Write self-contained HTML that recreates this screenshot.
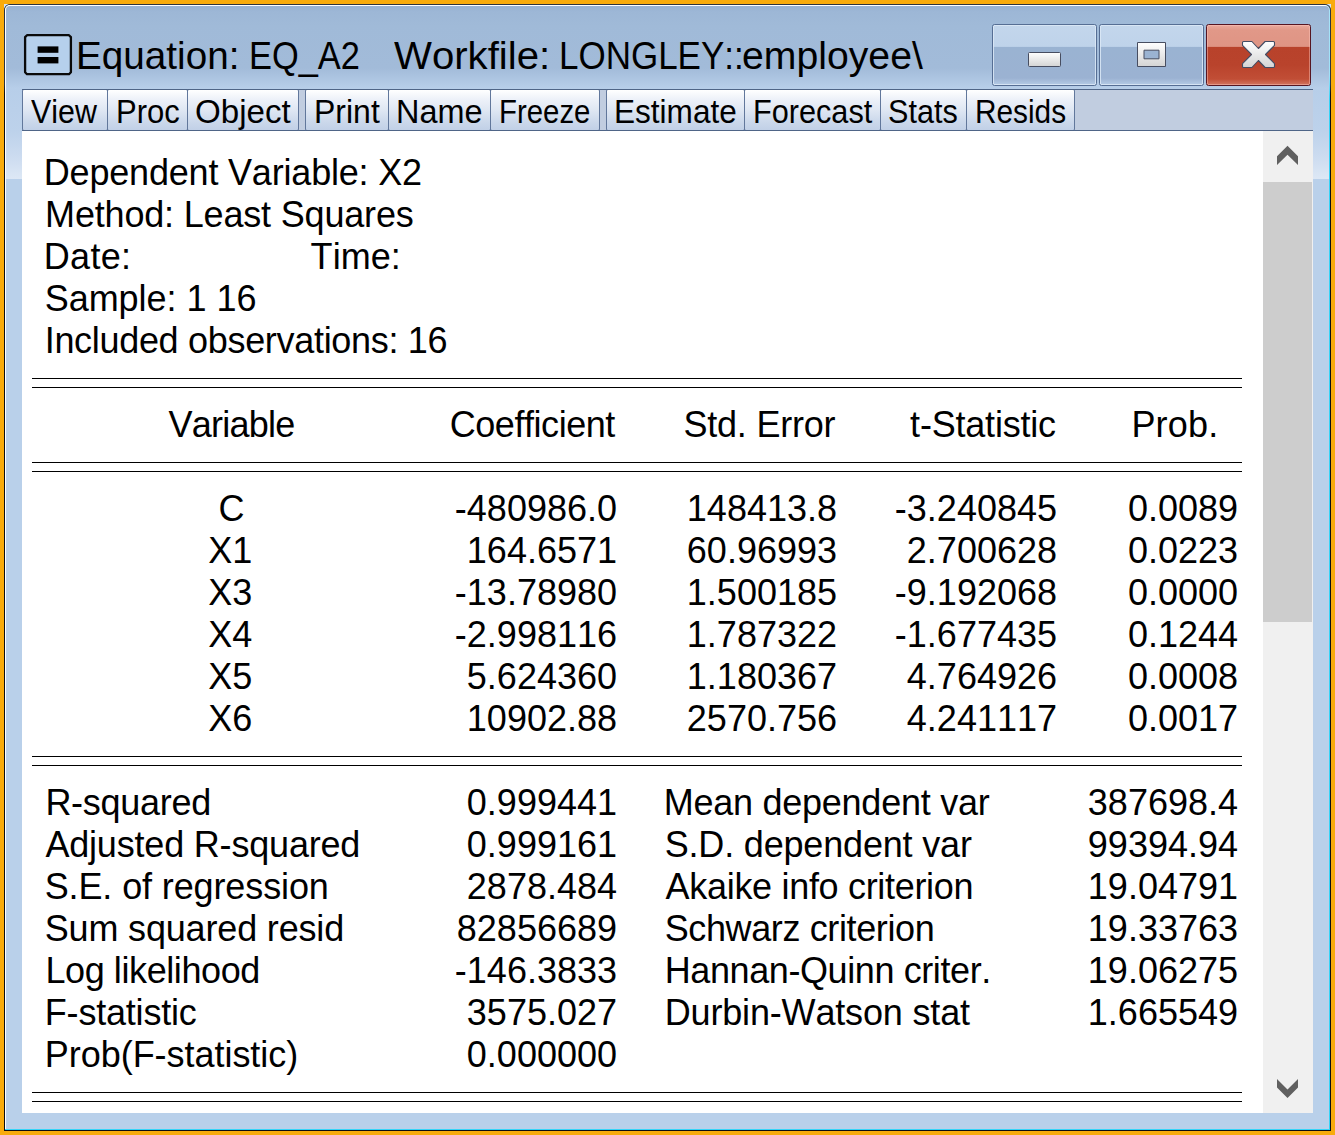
<!DOCTYPE html><html><head><meta charset="utf-8"><title>Equation: EQ_A2</title><style>
html,body{margin:0;padding:0;}
body{width:1335px;height:1135px;overflow:hidden;background:#f8ab0c;position:relative;font-family:"Liberation Sans",sans-serif;color:#000;font-kerning:none;font-variant-ligatures:none;}
.abs{position:absolute;}
#dark{left:4px;top:4px;width:1327px;height:1127px;background:linear-gradient(to bottom,#2b3340 0,#2b3340 80px,#0c0e12 90px,#0c0e12 100%);border-radius:6px 6px 0 0;}
.cpx{position:absolute;top:4px;width:4px;height:4px;background:#d4e5f8;}
#hl{left:5px;top:5px;width:1324px;height:1124px;border-radius:5px 5px 0 0;background:#ffffff;}
#cy{left:5px;top:5px;width:1325px;height:1125px;border-radius:5px 5px 0 0;background:linear-gradient(to bottom,#a8e4f8 0,#9fe2f8 70px,#35d4f7 95px,#35d4f7 100%);}
#frame{left:6px;top:6px;width:1323px;height:1123px;border-radius:4px 4px 0 0;
 background:linear-gradient(to bottom,#98b2d2 0px,#9db7d6 6px,#a0bad8 20px,#a2bbd9 62px,#b7ceE9 82px,#bdd2eb 126px,#cddcf0 152px,#dde8f5 173px,#b9d0ea 173px,#b9d0ea 100%);}
#tb{left:22px;top:89px;width:1291px;height:42px;background:#c1cde0;border-top:1px solid #4f6587;border-bottom:1px solid #4f6587;box-sizing:border-box;}
.btn{position:absolute;top:89px;height:42px;box-sizing:border-box;border:1px solid #6f86ab;border-radius:3px;
 background:linear-gradient(to bottom,#ffffff 0%,#eef2f9 22%,#dfe7f3 50%,#cbd8eb 80%,#c1d0e7 100%);border-color:#4f6587 #61779b #4f6587 #61779b;border-radius:2px;}
.btn span{position:absolute;top:1.4px;left:0;white-space:nowrap;font-size:33px;line-height:42px;transform-origin:0 50%;}
#content{left:22px;top:131px;width:1241px;height:982px;background:#fff;}
#sb{left:1263px;top:131px;width:50px;height:982px;background:#f0f0f0;}
#thumb{left:1263px;top:182px;width:49px;height:440px;background:#cdcdcd;}
.t{position:absolute;white-space:nowrap;font-size:36px;line-height:42px;height:42px;}
.r{text-align:right;}
.c{text-align:center;}
.ln{position:absolute;left:32px;width:1210px;height:1px;background:#000;}
.cap{position:absolute;top:24px;height:62px;box-sizing:border-box;border-radius:2.5px;}
.ttl{position:absolute;white-space:nowrap;font-size:38.4px;line-height:44px;top:33.6px;transform-origin:0 50%;}
</style></head><body>
<div class="cpx" style="left:4px"></div><div class="cpx" style="left:1327px"></div><div class="abs" id="dark"></div><div class="abs" id="cy"></div><div class="abs" id="hl"></div><div class="abs" id="frame"></div>
<svg class="abs" style="left:22px;top:32px" width="52" height="46" viewBox="22 32 52 46">
<path d="M27 35.2H69L70.9 37.1V72.3L69 74.2H27L25.1 72.3V37.1Z" fill="#b6d0ec" stroke="#0a0a0a" stroke-width="2.3" stroke-linejoin="round"/>
<rect x="37.6" y="46.4" width="20.8" height="6.4" fill="#000"/><rect x="37.6" y="57" width="20.8" height="6.4" fill="#000"/></svg>
<div id="title"><span class="ttl" style="left:75.78px;transform:scaleX(1.0071)">Equation: </span><span class="ttl" style="left:249.31px;transform:scaleX(0.8952)">EQ_A2   </span><span class="ttl" style="left:394.41px;transform:scaleX(1.0459)">Workfile: </span><span class="ttl" style="left:559.07px;transform:scaleX(0.9114)">LONGLEY::</span><span class="ttl" style="left:742.30px;transform:scaleX(1.0209)">employee\</span></div>
<div class="cap" style="left:992px;width:105px;border:1px solid #566e94;background:linear-gradient(to bottom,#c3d6ec 0,#bfd3ea 21.4px,#9ab3d2 22.3px,#9bb2d2 53px,#b5cbe6 60px);box-shadow:inset 0 0 0 1px rgba(220,233,247,.85);"></div>
<div class="cap" style="left:1099px;width:105px;border:1px solid #566e94;background:linear-gradient(to bottom,#c3d6ec 0,#bfd3ea 21.4px,#9ab3d2 22.3px,#9bb2d2 53px,#b5cbe6 60px);box-shadow:inset 0 0 0 1px rgba(220,233,247,.85);"></div>
<div class="cap" style="left:1206px;width:105px;border:1px solid #561622;background:linear-gradient(to bottom,#eaaa9d 0,#e19888 5px,#df9484 21.4px,#b8422b 22.3px,#b9432c 40px,#c14e36 54px,#d27560 60px);box-shadow:inset 0 0 0 1px rgba(255,200,190,.45);"></div>
<svg class="abs" style="left:1020px;top:36px" width="270" height="40" viewBox="1020 36 270 40">
<defs><linearGradient id="g" x1="0" y1="0" x2="0" y2="1"><stop offset="0" stop-color="#ffffff"/><stop offset="1" stop-color="#d4d4d4"/></linearGradient></defs>
<rect x="1028.5" y="52.5" width="32" height="14" rx="1" fill="url(#g)" stroke="#474d60" stroke-width="1"/>
<path fill-rule="evenodd" d="M1137.5 42.5h28v24h-28z M1144 50.2h15v8.6h-15z" fill="url(#g)" stroke="#474d60" stroke-width="1"/>
<path d="M1242.5 42.5Q1242.5 41.5 1243.5 41.5H1251.9L1258.4 48.5L1265.1 41.5H1273.5Q1274.5 41.5 1274.5 42.5V45.3L1265.5 54.5L1274.5 63.6V66.5Q1274.5 67.5 1273.5 67.5H1265.1L1258.4 60.5L1251.9 67.5H1243.5Q1242.5 67.5 1242.5 66.5V63.6L1251.5 54.5L1242.5 45.3Z" fill="url(#g)" stroke="#434d64" stroke-width="1.1" stroke-linejoin="round"/>
</svg>
<div class="abs" id="tb"></div>
<div class="btn" style="left:22px;width:86px"><span style="left:8.04px;transform:scaleX(0.9213)">View</span></div>
<div class="btn" style="left:107px;width:81px"><span style="left:7.93px;transform:scaleX(0.9393)">Proc</span></div>
<div class="btn" style="left:187px;width:112px"><span style="left:6.59px;transform:scaleX(1.0027)">Object</span></div>
<div class="btn" style="left:305px;width:84px"><span style="left:7.69px;transform:scaleX(0.9692)">Print</span></div>
<div class="btn" style="left:388px;width:103px"><span style="left:7.03px;transform:scaleX(0.9823)">Name</span></div>
<div class="btn" style="left:490px;width:110px"><span style="left:8.48px;transform:scaleX(0.8900)">Freeze</span></div>
<div class="btn" style="left:606px;width:139px"><span style="left:6.69px;transform:scaleX(0.9562)">Estimate</span></div>
<div class="btn" style="left:744px;width:137px"><span style="left:7.68px;transform:scaleX(0.9290)">Forecast</span></div>
<div class="btn" style="left:880px;width:87px"><span style="left:7.19px;transform:scaleX(0.9266)">Stats</span></div>
<div class="btn" style="left:966px;width:109px"><span style="left:7.87px;transform:scaleX(0.9031)">Resids</span></div>
<div class="abs" id="content"></div><div class="abs" id="sb"></div><div class="abs" id="thumb"></div>
<svg class="abs" style="left:1263px;top:131px" width="50" height="982" viewBox="1263 131 50 982">
<path d="M1277 156.3L1287.5 145.8L1298 156.3V165L1287.5 154.8L1277 165Z" fill="#606060"/>
<path d="M1277 1087.5L1287.5 1098L1298 1087.5V1079L1287.5 1089.5L1277 1079Z" fill="#606060"/></svg>
<div class="ln" style="top:378px"></div>
<div class="ln" style="top:387px"></div>
<div class="ln" style="top:462px"></div>
<div class="ln" style="top:471px"></div>
<div class="ln" style="top:756px"></div>
<div class="ln" style="top:765px"></div>
<div class="ln" style="top:1092px"></div>
<div class="ln" style="top:1101px"></div>
<div class="t" style="left:43.80px;top:152.03px;letter-spacing:-0.190px">Dependent Variable: X2</div>
<div class="t" style="left:45.10px;top:194.03px;letter-spacing:-0.180px">Method: Least Squares</div>
<div class="t" style="left:43.80px;top:236.03px;letter-spacing:0.300px">Date:</div>
<div class="t" style="left:310.60px;top:236.03px;letter-spacing:0.050px">Time:</div>
<div class="t" style="left:44.70px;top:278.03px;letter-spacing:-0.036px">Sample: 1 16</div>
<div class="t" style="left:44.70px;top:320.03px;letter-spacing:-0.308px">Included observations: 16</div>
<div class="t" style="left:168.60px;top:404.03px;letter-spacing:-0.771px">Variable</div>
<div class="t" style="left:449.70px;top:404.03px;letter-spacing:-0.440px">Coefficient</div>
<div class="t" style="left:683.50px;top:404.03px;letter-spacing:-0.222px">Std. Error</div>
<div class="t" style="left:910.10px;top:404.03px;letter-spacing:-0.200px">t-Statistic</div>
<div class="t" style="left:1131.40px;top:404.03px;letter-spacing:0.200px">Prob.</div>
<div class="t c" style="left:81.5px;width:300px;top:488.03px">C</div>
<div class="t r" style="left:317px;width:300px;top:488.03px">-480986.0</div>
<div class="t r" style="left:537px;width:300px;top:488.03px">148413.8</div>
<div class="t r" style="left:757px;width:300px;top:488.03px">-3.240845</div>
<div class="t r" style="left:938px;width:300px;top:488.03px">0.0089</div>
<div class="t c" style="left:80.19999999999999px;width:300px;top:530.03px">X1</div>
<div class="t r" style="left:317px;width:300px;top:530.03px">164.6571</div>
<div class="t r" style="left:537px;width:300px;top:530.03px">60.96993</div>
<div class="t r" style="left:757px;width:300px;top:530.03px">2.700628</div>
<div class="t r" style="left:938px;width:300px;top:530.03px">0.0223</div>
<div class="t c" style="left:80.19999999999999px;width:300px;top:572.03px">X3</div>
<div class="t r" style="left:317px;width:300px;top:572.03px">-13.78980</div>
<div class="t r" style="left:537px;width:300px;top:572.03px">1.500185</div>
<div class="t r" style="left:757px;width:300px;top:572.03px">-9.192068</div>
<div class="t r" style="left:938px;width:300px;top:572.03px">0.0000</div>
<div class="t c" style="left:80.19999999999999px;width:300px;top:614.03px">X4</div>
<div class="t r" style="left:317px;width:300px;top:614.03px">-2.998116</div>
<div class="t r" style="left:537px;width:300px;top:614.03px">1.787322</div>
<div class="t r" style="left:757px;width:300px;top:614.03px">-1.677435</div>
<div class="t r" style="left:938px;width:300px;top:614.03px">0.1244</div>
<div class="t c" style="left:80.19999999999999px;width:300px;top:656.03px">X5</div>
<div class="t r" style="left:317px;width:300px;top:656.03px">5.624360</div>
<div class="t r" style="left:537px;width:300px;top:656.03px">1.180367</div>
<div class="t r" style="left:757px;width:300px;top:656.03px">4.764926</div>
<div class="t r" style="left:938px;width:300px;top:656.03px">0.0008</div>
<div class="t c" style="left:80.19999999999999px;width:300px;top:698.03px">X6</div>
<div class="t r" style="left:317px;width:300px;top:698.03px">10902.88</div>
<div class="t r" style="left:537px;width:300px;top:698.03px">2570.756</div>
<div class="t r" style="left:757px;width:300px;top:698.03px">4.241117</div>
<div class="t r" style="left:938px;width:300px;top:698.03px">0.0017</div>
<div class="t" style="left:45.40px;top:782.03px;letter-spacing:-0.275px">R-squared</div>
<div class="t r" style="left:317px;width:300px;top:782.03px">0.999441</div>
<div class="t" style="left:663.80px;top:782.03px;letter-spacing:-0.259px">Mean dependent var</div>
<div class="t r" style="left:938px;width:300px;top:782.03px">387698.4</div>
<div class="t" style="left:45.40px;top:824.03px;letter-spacing:-0.188px">Adjusted R-squared</div>
<div class="t r" style="left:317px;width:300px;top:824.03px">0.999161</div>
<div class="t" style="left:664.70px;top:824.03px;letter-spacing:-0.176px">S.D. dependent var</div>
<div class="t r" style="left:938px;width:300px;top:824.03px">99394.94</div>
<div class="t" style="left:44.70px;top:866.03px;letter-spacing:-0.118px">S.E. of regression</div>
<div class="t r" style="left:317px;width:300px;top:866.03px">2878.484</div>
<div class="t" style="left:665.60px;top:866.03px;letter-spacing:-0.310px">Akaike info criterion</div>
<div class="t r" style="left:938px;width:300px;top:866.03px">19.04791</div>
<div class="t" style="left:44.70px;top:908.03px;letter-spacing:-0.163px">Sum squared resid</div>
<div class="t r" style="left:317px;width:300px;top:908.03px">82856689</div>
<div class="t" style="left:664.70px;top:908.03px;letter-spacing:-0.375px">Schwarz criterion</div>
<div class="t r" style="left:938px;width:300px;top:908.03px">19.33763</div>
<div class="t" style="left:45.40px;top:950.03px;letter-spacing:-0.400px">Log likelihood</div>
<div class="t r" style="left:317px;width:300px;top:950.03px">-146.3833</div>
<div class="t" style="left:664.70px;top:950.03px;letter-spacing:-0.400px">Hannan-Quinn criter.</div>
<div class="t r" style="left:938px;width:300px;top:950.03px">19.06275</div>
<div class="t" style="left:44.80px;top:992.03px;letter-spacing:-0.200px">F-statistic</div>
<div class="t r" style="left:317px;width:300px;top:992.03px">3575.027</div>
<div class="t" style="left:664.70px;top:992.03px;letter-spacing:-0.165px">Durbin-Watson stat</div>
<div class="t r" style="left:938px;width:300px;top:992.03px">1.665549</div>
<div class="t" style="left:44.80px;top:1034.03px;letter-spacing:-0.037px">Prob(F-statistic)</div>
<div class="t r" style="left:317px;width:300px;top:1034.03px">0.000000</div>
</body></html>
